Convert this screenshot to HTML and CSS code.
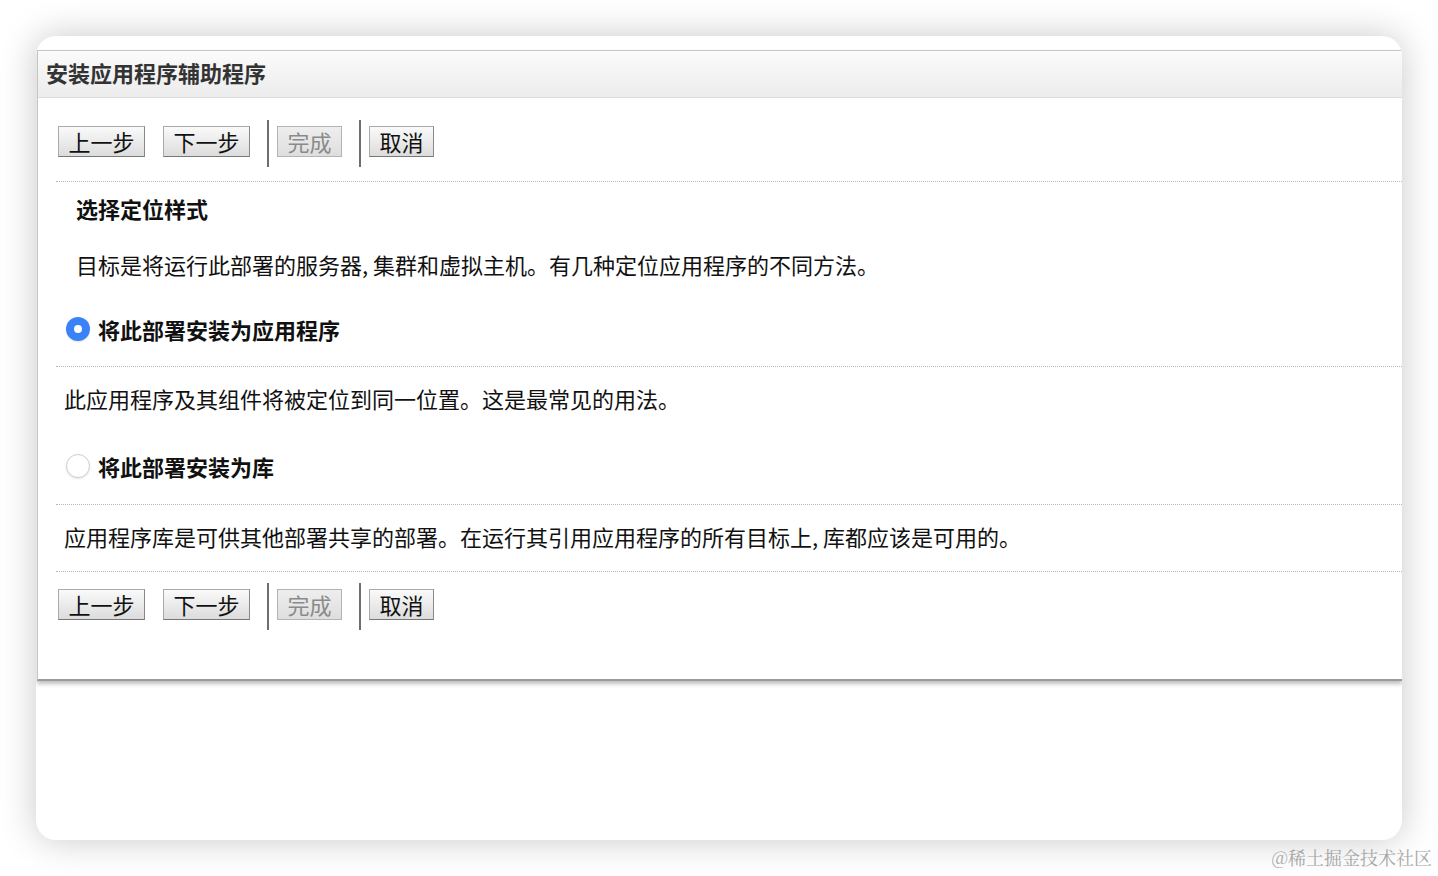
FILE: index.html
```html
<!DOCTYPE html>
<html lang="zh-CN">
<head>
	<meta charset="UTF-8">
	<title>安装应用程序辅助程序</title>
	<link rel="stylesheet" href="styles.css">
</head>
<body>
	<div class="window">
		<div class="panel">
			<div class="titlebar">安装应用程序辅助程序</div>
			<div class="panel-body">
				<div class="toolbar top">
					<span class="btn">上一步</span>
					<span class="btn">下一步</span>
					<span class="sep"></span>
					<span class="btn disabled">完成</span>
					<span class="sep"></span>
					<span class="btn">取消</span>
				</div>
				<div class="dots"></div>
				<div class="heading">选择定位样式</div>
				<div class="intro">目标是将运行此部署的服务器, 集群和虚拟主机。有几种定位应用程序的不同方法。</div>
				<label class="option first">
					<span class="radio checked"></span>
					<span class="option-label">将此部署安装为应用程序</span>
				</label>
				<div class="dots"></div>
				<div class="note">此应用程序及其组件将被定位到同一位置。这是最常见的用法。</div>
				<label class="option second">
					<span class="radio"></span>
					<span class="option-label">将此部署安装为库</span>
				</label>
				<div class="dots"></div>
				<div class="note">应用程序库是可供其他部署共享的部署。在运行其引用应用程序的所有目标上, 库都应该是可用的。</div>
				<div class="dots"></div>
				<div class="toolbar bottom">
					<span class="btn">上一步</span>
					<span class="btn">下一步</span>
					<span class="sep"></span>
					<span class="btn disabled">完成</span>
					<span class="sep"></span>
					<span class="btn">取消</span>
				</div>
			</div>
		</div>
	</div>
	<div class="watermark">@稀土掘金技术社区</div>
</body>
</html>
```

FILE: styles.css
```css
html, body {
	margin: 0;
	padding: 0;
	background: #fff;
}
body {
	font-family: "Noto Sans CJK SC", "PingFang SC", sans-serif;
	font-size: 22px;
	color: #111;
	width: 1438px;
	height: 876px;
	overflow: hidden;
	position: relative;
}
.window {
	margin: 36px 0 0 36px;
	width: 1366px;
	height: 804px;
	background: #fff;
	border-radius: 20px;
	overflow: hidden;
	box-shadow: 0 0 36px rgba(0, 0, 0, 0.22);
	padding-top: 14px;
	box-sizing: border-box;
}
.panel {
	margin-left: 1px;
	border-left: 1px solid #c4c4c4;
	border-top: 1px solid #c6c6c6;
	border-bottom: 2px solid #9a9a9a;
	box-shadow: 0 3px 4px rgba(0, 0, 0, 0.25);
	background: #fff;
}
.titlebar {
	height: 46px;
	line-height: 43px;
	padding-left: 8px;
	font-weight: bold;
	font-size: 22px;
	color: #333;
	background: linear-gradient(#fbfbfb, #ececec);
	border-bottom: 1px solid #dcdcdc;
}
.panel-body {
	padding: 0 0 49px 18px;
}
.toolbar {
	display: flex;
	align-items: center;
	height: 47px;
	padding-left: 2px;
}
.toolbar.top { margin-top: 22px; margin-bottom: 14px; }
.toolbar.bottom { margin-top: 11px; }
.btn {
	display: inline-block;
	height: 29px;
	line-height: 29px;
	padding: 0 9.5px;
	font-size: 22px;
	color: #111;
	background: linear-gradient(#fafafa, #dcdcdc);
	border: 1px solid #aaa;
	border-right-color: #888;
	border-bottom-color: #777;
	margin-right: 18px;
	margin-bottom: 4px;
}
.btn.disabled {
	color: #8a8a8a;
	background: linear-gradient(#eee, #dedede);
	border: 1px solid #b4b4b4;
}
.sep {
	width: 2px;
	height: 47px;
	background: #6e6e6e;
	margin-left: -1px;
	margin-right: 8px;
}
.dots {
	border-top: 1px dotted #b8b8b8;
	height: 0;
}
.heading {
	font-weight: bold;
	line-height: 32px;
	padding-left: 20px;
	margin-top: 10px;
	color: #111;
}
.intro {
	line-height: 32px;
	padding-left: 20px;
	margin-top: 24px;
	color: #111;
}
.option {
	display: flex;
	align-items: center;
	height: 32px;
	padding-left: 10px;
	margin: 0 0 21px;
}
.option.first { margin-top: 33px; }
.option.second { margin-bottom: 22px; }
.radio {
	width: 24px;
	height: 24px;
	border-radius: 50%;
	box-sizing: border-box;
	margin-right: 8px;
	border: 1px solid #cfcfcf;
	background: #fff;
	box-shadow: 0 1px 2px rgba(0, 0, 0, 0.1);
	position: relative;
}
.radio.checked {
	border: none;
	background: #3a82f7;
}
.radio.checked::after {
	content: "";
	position: absolute;
	left: 8px;
	top: 8px;
	width: 8px;
	height: 8px;
	border-radius: 50%;
	background: #fff;
}
.option-label {
	font-weight: bold;
	color: #111;
}
.note {
	line-height: 32px;
	padding-left: 8px;
	margin: 15px 0 36px;
	color: #111;
}
.note + .dots { margin-top: -17px; }
.watermark {
	position: absolute;
	right: 6px;
	bottom: 6px;
	font-family: "Noto Serif CJK SC", "Liberation Serif", serif;
	font-size: 18px;
	color: #a6a6a6;
}
```
